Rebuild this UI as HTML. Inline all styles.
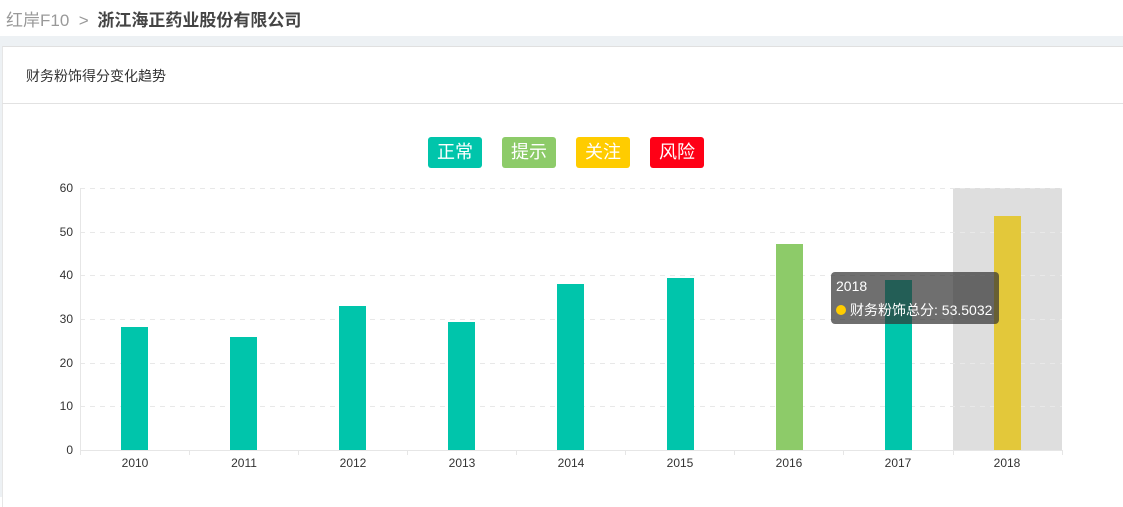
<!DOCTYPE html>
<html><head><meta charset="utf-8"><style>
body{margin:0;width:1123px;height:497px;overflow:hidden;background:#fff;font-family:"Liberation Sans","Noto Sans CJK SC",sans-serif;position:relative}
.top{position:absolute;left:0;top:0;width:1123px;height:36px;background:#fff}
.crumb{position:absolute;left:6px;top:6px;font-size:17px;color:#999;white-space:nowrap}
.crumb b{color:#444;font-weight:bold;margin-left:4px}
.band{position:absolute;left:0;top:36px;width:1123px;height:10px;background:#edf1f4}
.card{position:absolute;left:2px;top:46px;width:1130px;height:460px;border-top:1px solid #e0e0e0;border-left:1px solid #e6e6e6;background:#fff}
.left{position:absolute;left:0;top:46px;width:2px;height:451px;background:#edf1f4}
.title{position:absolute;left:26px;top:66px;font-size:14px;color:#333}
.div{position:absolute;left:2px;top:103px;width:1121px;height:1px;background:#e2e2e2}
.lg{position:absolute;top:137px;width:54px;height:31px;border-radius:3px;color:#fff;font-size:18px;line-height:31px;text-align:center}
.tip{position:absolute;left:831px;top:272px;width:168px;height:52px;background:rgba(50,50,50,0.7);border-radius:4px;color:#fff;font-size:14px}
</style></head><body>
<div class="top"><div class="crumb">红岸F10 &nbsp;&gt; <b>浙江海正药业股份有限公司</b></div></div>
<div class="band"></div>
<div class="card"></div>
<div class="left"></div>
<div class="title">财务粉饰得分变化趋势</div>
<div class="div"></div>
<div class="lg" style="left:428px;background:#00c5ab">正常</div>
<div class="lg" style="left:502px;background:#8dcb69">提示</div>
<div class="lg" style="left:576px;background:#ffcc00">关注</div>
<div class="lg" style="left:650px;background:#ff0016">风险</div>
<svg style="position:absolute;left:0;top:0" width="1123" height="497" font-family="Liberation Sans, sans-serif" font-size="12" fill="#333">
<rect x="953" y="188" width="109" height="262" fill="#dedede"/>
<g stroke="#e8e8e8" stroke-dasharray="5,5">
<line x1="80" y1="188.5" x2="1062" y2="188.5"/>
<line x1="80" y1="232.5" x2="1062" y2="232.5"/>
<line x1="80" y1="275.5" x2="1062" y2="275.5"/>
<line x1="80" y1="319.5" x2="1062" y2="319.5"/>
<line x1="80" y1="363.5" x2="1062" y2="363.5"/>
<line x1="80" y1="406.5" x2="1062" y2="406.5"/>
</g>
<line x1="80.5" y1="188" x2="80.5" y2="455" stroke="#e6e6e6"/>
<line x1="80" y1="450.5" x2="1062" y2="450.5" stroke="#e6e6e6"/>
<g stroke="#e6e6e6">
<line x1="189.5" y1="450" x2="189.5" y2="455"/><line x1="298.5" y1="450" x2="298.5" y2="455"/>
<line x1="407.5" y1="450" x2="407.5" y2="455"/><line x1="516.5" y1="450" x2="516.5" y2="455"/>
<line x1="625.5" y1="450" x2="625.5" y2="455"/><line x1="734.5" y1="450" x2="734.5" y2="455"/>
<line x1="843.5" y1="450" x2="843.5" y2="455"/><line x1="953.5" y1="450" x2="953.5" y2="455"/>
<line x1="1062.5" y1="450" x2="1062.5" y2="455"/>
</g>
<g text-anchor="end">
<text x="73" y="192">60</text><text x="73" y="236">50</text><text x="73" y="279">40</text>
<text x="73" y="323">30</text><text x="73" y="367">20</text><text x="73" y="410">10</text><text x="73" y="454">0</text>
</g>
<g fill="#00c5ab">
<rect x="121" y="327" width="27" height="123"/>
<rect x="230" y="337" width="27" height="113"/>
<rect x="339" y="306" width="27" height="144"/>
<rect x="448" y="322" width="27" height="128"/>
<rect x="557" y="284" width="27" height="166"/>
<rect x="667" y="278" width="27" height="172"/>
<rect x="885" y="280" width="27" height="170"/>
</g>
<rect x="776" y="244" width="27" height="206" fill="#8dcb69"/>
<rect x="994" y="216" width="27" height="234" fill="#e3c83a"/>
<g text-anchor="middle">
<text x="135" y="467">2010</text><text x="244" y="467">2011</text><text x="353" y="467">2012</text>
<text x="462" y="467">2013</text><text x="571" y="467">2014</text><text x="680" y="467">2015</text>
<text x="789" y="467">2016</text><text x="898" y="467">2017</text><text x="1007" y="467">2018</text>
</g>
</svg>
<div class="tip"><div style="position:absolute;left:5px;top:6px">2018</div>
<div style="position:absolute;left:5px;top:28px;white-space:nowrap"><span style="display:inline-block;width:10px;height:10px;border-radius:5px;background:#ffcc00;margin-right:4px"></span>财务粉饰总分: 53.5032</div></div>
</body></html>
